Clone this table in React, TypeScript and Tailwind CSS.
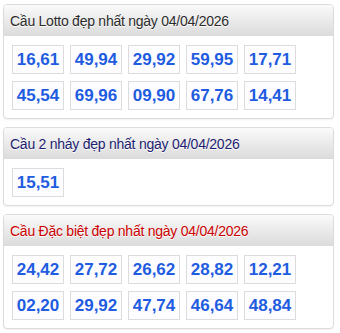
import React from "react";

type Section = {
  title: string;
  color: string;
  pairs: string[];
};

const sections: Section[] = [
  {
    title: "Cầu Lotto đẹp nhất ngày 04/04/2026",
    color: "text-[#2b2b2b]",
    pairs: ["16,61", "49,94", "29,92", "59,95", "17,71", "45,54", "69,96", "09,90", "67,76", "14,41"],
  },
  {
    title: "Cầu 2 nháy đẹp nhất ngày 04/04/2026",
    color: "text-[#1c1c70]",
    pairs: ["15,51"],
  },
  {
    title: "Cầu Đặc biệt đẹp nhất ngày 04/04/2026",
    color: "text-[#cc0000]",
    pairs: ["24,42", "27,72", "26,62", "28,82", "12,21", "02,20", "29,92", "47,74", "46,64", "48,84"],
  },
];

const PairBox: React.FC<{ value: string }> = ({ value }) => (
  <div className="w-[52px] h-[29px] flex items-center justify-center border border-[#dcdcdc] bg-[#fdfdff] text-[17px] font-bold text-[#1f5ce0] leading-none">
    {value}
  </div>
);

const CauCard: React.FC<{ section: Section }> = ({ section }) => (
  <div className="w-[331px] border border-[#dcdcdc] rounded-[4px] bg-white overflow-hidden shadow-[0_1px_2px_rgba(0,0,0,0.06)]">
    <div className="h-[31px] flex items-center pl-[6px] bg-gradient-to-b from-[#fafafa] to-[#dbdbdb]">
      <h3
        className={`text-[14px] tracking-[-0.25px] leading-none [text-shadow:0_1px_0_#ffffff] ${section.color}`}
      >
        {section.title}
      </h3>
    </div>
    <div className="pt-[9px] pb-[8px] pl-[8px] grid grid-cols-[repeat(5,52px)] gap-x-[6px] gap-y-[7px]">
      {section.pairs.map((p, i) => (
        <PairBox key={i} value={p} />
      ))}
    </div>
  </div>
);

export default function App() {
  return (
    <div
      className="w-[340px] h-[333px] bg-white pt-[4px] pl-[3px] flex flex-col gap-[8px]"
      style={{ fontFamily: '"Liberation Sans", Arial, sans-serif' }}
    >
      {sections.map((s, i) => (
        <CauCard key={i} section={s} />
      ))}
    </div>
  );
}
